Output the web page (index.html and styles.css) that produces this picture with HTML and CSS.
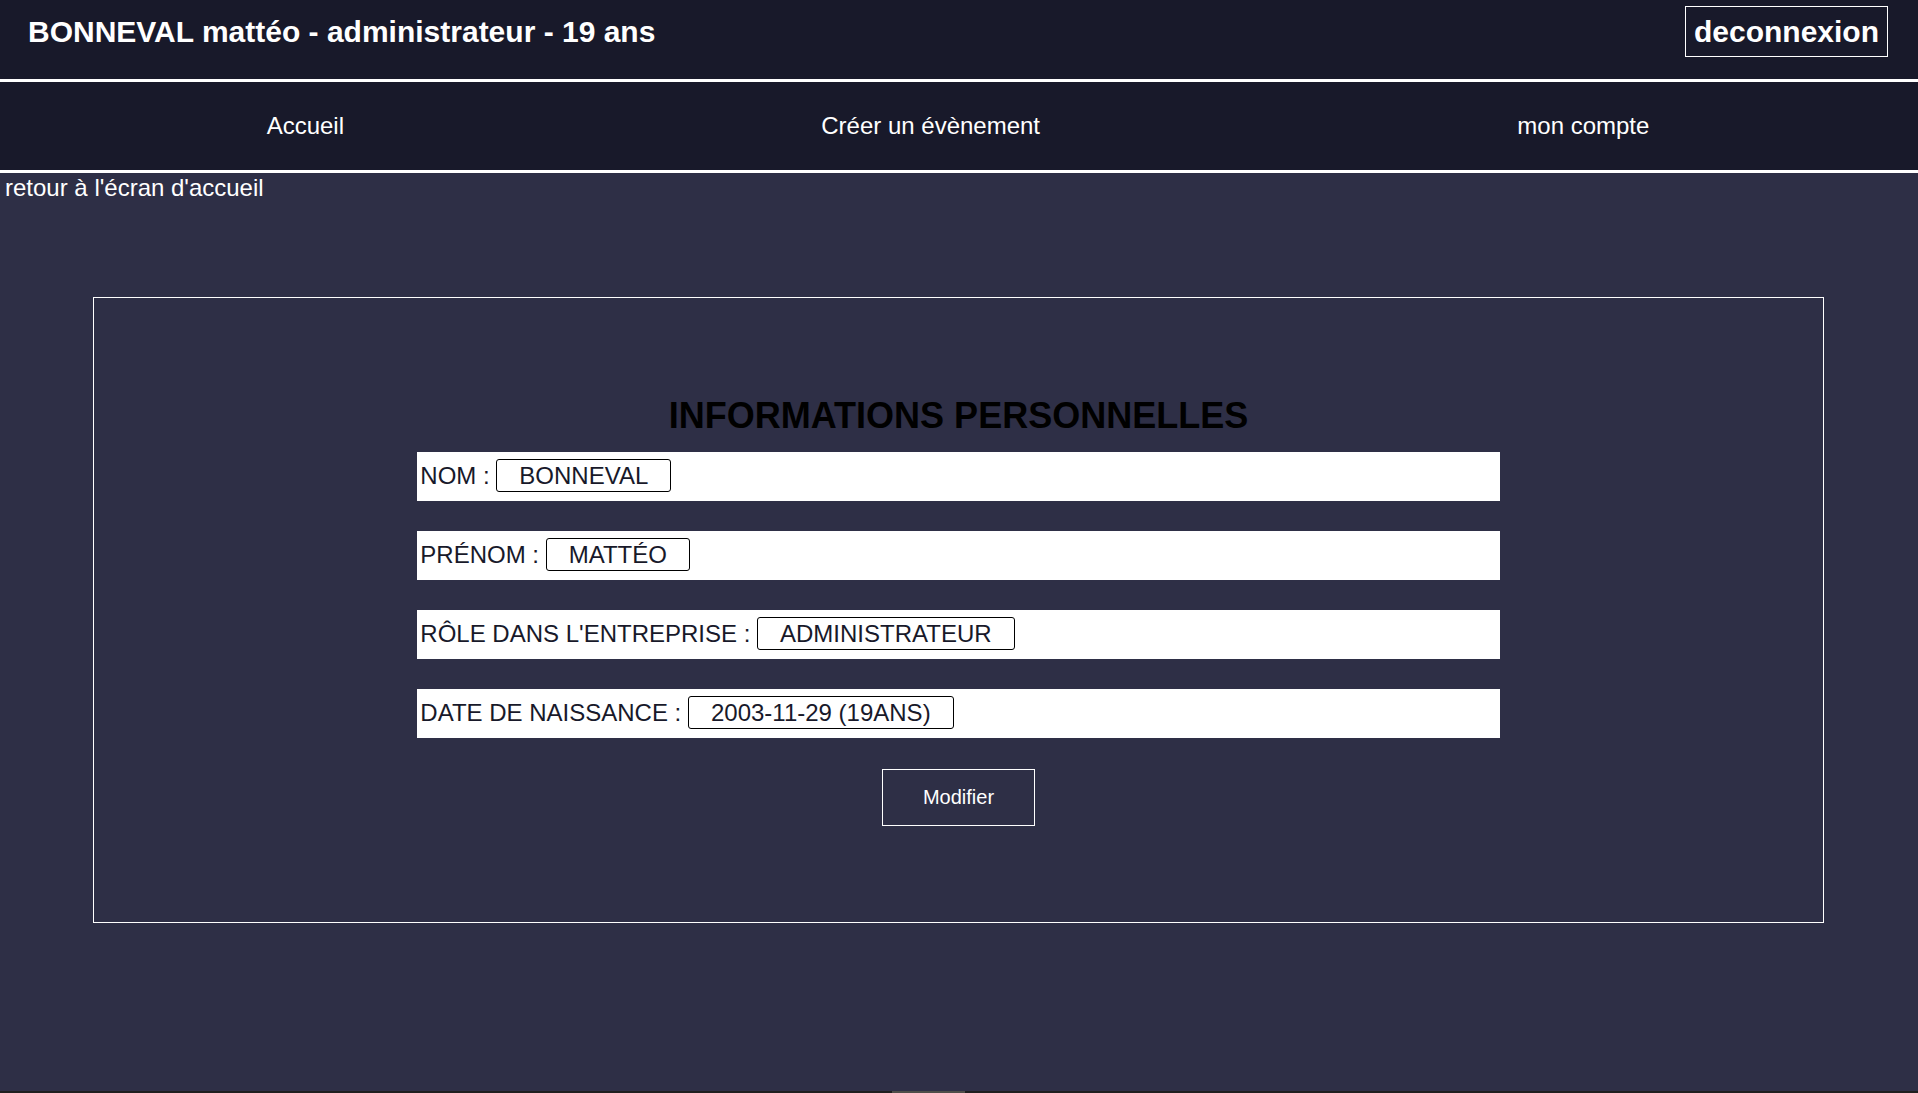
FILE: index.html
```html
<!DOCTYPE html>
<html lang="fr">
<head>
  <meta charset="utf-8">
  <meta name="viewport" content="width=device-width, initial-scale=1">
  <title>Mon compte</title>
  <link rel="stylesheet" href="styles.css">
</head>
<body>
  <header class="topbar">
    <h1 class="topbar-user">BONNEVAL mattéo - administrateur - 19 ans</h1>
    <a class="topbar-logout" href="#">deconnexion</a>
  </header>
  <nav class="menu">
    <a class="menu-link" href="#">Accueil</a>
    <a class="menu-link" href="#">Créer un évènement</a>
    <a class="menu-link" href="#">mon compte</a>
  </nav>
  <main class="content">
    <a class="back-link" href="#">retour à l'écran d'accueil</a>
    <section class="card">
      <h2 class="card-title">informations personnelles</h2>
      <div class="fields">
        <p class="field">nom : <span class="field-value">Bonneval</span></p>
        <p class="field">prénom : <span class="field-value">mattéo</span></p>
        <p class="field">rôle dans l'entreprise : <span class="field-value">administrateur</span></p>
        <p class="field">date de naissance : <span class="field-value">2003-11-29 (19ans)</span></p>
      </div>
      <button class="edit-button" type="button">Modifier</button>
    </section>
  </main>
  <footer class="strip"><div class="strip-mark"></div></footer>
</body>
</html>
```
FILE: styles.css
```css
* {
  box-sizing: border-box;
  margin: 0;
  padding: 0;
}

body {
  display: flex;
  flex-direction: column;
  min-height: 100vh;
  background: #2e2f46;
  color: #fff;
  font-family: Arial, "Liberation Sans", sans-serif;
  font-size: 24px;
  line-height: 28px;
}

a {
  color: inherit;
  text-decoration: none;
}

.topbar {
  display: flex;
  justify-content: space-between;
  align-items: center;
  padding: 6px 30px 22px 28px;
  background: #18192a;
  border-bottom: 3px solid #fff;
}

.topbar-user,
.topbar-logout {
  font-size: 30px;
  font-weight: bold;
  line-height: 33px;
}

.topbar-logout {
  padding: 8px;
  border: 1px solid #fff;
}

.menu {
  display: flex;
  justify-content: space-around;
  padding: 30px 30px 30px 28px;
  background: #18192a;
  border-bottom: 3px solid #fff;
}

.content {
  flex: 1;
  display: flex;
  flex-direction: column;
}

.back-link {
  align-self: flex-start;
  padding: 1px 0 0 5px;
}

.card {
  display: flex;
  flex-direction: column;
  align-items: center;
  margin: 95px 94px 95px 93px;
  padding: 97px 0 96px;
  border: 1px solid #fff;
}

.card-title {
  margin-bottom: 15px;
  color: #000;
  font-size: 36px;
  line-height: 42px;
  text-transform: uppercase;
}

.fields {
  display: flex;
  flex-direction: column;
  gap: 30px;
  width: 62.6%;
  margin-bottom: 31px;
}

.field {
  padding: 7px 3px 9px;
  background: #fff;
  color: #18192a;
  line-height: 33px;
  text-transform: uppercase;
}

.field-value {
  display: inline-block;
  padding: 2px 22px;
  border: 1px solid #000;
  border-radius: 3px;
  line-height: 27px;
}

.edit-button {
  padding: 16px 40px;
  background: transparent;
  border: 1px solid #fff;
  color: #fff;
  font-family: inherit;
  font-size: 20px;
  line-height: 23px;
}

.strip {
  display: flex;
  justify-content: center;
  height: 2px;
  padding-right: 62px;
  background: #1f1f1f;
}

.strip-mark {
  width: 73px;
  background: #4f4e49;
}
```
